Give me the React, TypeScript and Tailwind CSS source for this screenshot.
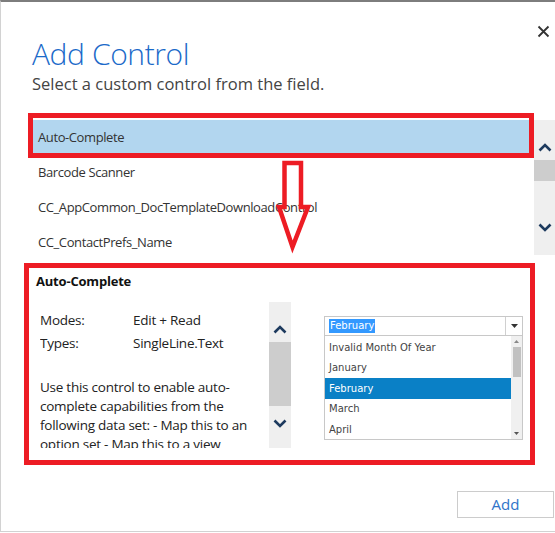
import React from "react";

const FONT = { fontFamily: '"Open Sans", "Noto Sans", sans-serif' };

function Chevron({ dir }: { dir: "up" | "down" }) {
  return (
    <svg width="14" height="9" viewBox="0 0 14 9" className="block">
      <path
        d={dir === "up" ? "M1.5 7.5 L7 2 L12.5 7.5" : "M1.5 1.5 L7 7 L12.5 1.5"}
        fill="none"
        stroke="#1d3a5e"
        strokeWidth="2.6"
      />
    </svg>
  );
}

function ScrollBar({
  width,
  topPad,
  topH,
  thumbH,
  bottomPad,
}: {
  width: string;
  topPad: string;
  topH: string;
  thumbH: string;
  bottomPad: string;
}) {
  return (
    <div className={`${width} h-full flex flex-col bg-[#efefef] shrink-0`}>
      <div className={`${topH} ${topPad} flex justify-center`}>
        <Chevron dir="up" />
      </div>
      <div className={`${thumbH} bg-[#cdcdcd]`} />
      <div className="flex-1" />
      <div className={`${bottomPad} flex justify-center`}>
        <Chevron dir="down" />
      </div>
    </div>
  );
}

const rows = [
  "Auto-Complete",
  "Barcode Scanner",
  "CC_AppCommon_DocTemplateDownloadControl",
  "CC_ContactPrefs_Name",
];

const months = ["Invalid Month Of Year", "January", "February", "March", "April"];

export default function App() {
  return (
    <div className="w-[555px] h-[533px] overflow-hidden bg-white relative" style={FONT}>
      <div className="h-[532px] border-t-2 border-t-[#7d7d7d] border-l border-l-[#d2d2d2] border-b border-b-[#d2d2d2] flex flex-col">
        {/* Header */}
        <div className="pt-[34px] pl-[31px]">
          <div className="text-[30px] leading-[36px] font-light text-[#1b6ac9] tracking-[-0.4px]">
            Add Control
          </div>
          <div className="text-[16.5px] leading-[24px] text-[#444444]">
            Select a custom control from the field.
          </div>
        </div>

        {/* List */}
        <div className="mt-[24px] pl-[32px] flex h-[135px]">
          <div className="w-[498px] h-full overflow-hidden">
            {rows.map((r, i) => (
              <div
                key={r}
                className={`h-[35px] flex items-center pl-[5px] text-[13px] tracking-[-0.4px] text-[#333333] ${
                  i === 0 ? "bg-[#b2d6ef]" : ""
                }`}
              >
                {r}
              </div>
            ))}
          </div>
          <div className="w-[3px]" />
          <ScrollBar width="w-[21px]" topH="h-[40px]" topPad="pt-[23px]" thumbH="h-[21px]" bottomPad="pb-[23px]" />
        </div>

        {/* Details */}
        <div className="mt-[8px] ml-[23px] w-[511px] h-[202px] border-[5px] border-[#ed1c24] flex flex-col">
          <div className="pt-[4px] pl-[7px] text-[13px] leading-[18px] font-bold text-[#111111] tracking-[-0.2px]">
            Auto-Complete
          </div>
          <div className="mt-[12px] h-[146px] flex">
            <div className="ml-[11px] w-[229px] h-full overflow-hidden pt-[7px] text-[13.5px] tracking-[-0.25px] text-[#222222]">
              <div className="flex leading-[23px]">
                <div className="w-[93px]">Modes:</div>
                <div>Edit + Read</div>
              </div>
              <div className="flex leading-[23px]">
                <div className="w-[93px]">Types:</div>
                <div>SingleLine.Text</div>
              </div>
              <div className="mt-[23px] leading-[19px] pr-[4px]">
                Use this control to enable auto-complete capabilities from the following data set: - Map this to an option set - Map this to a view
              </div>
            </div>
            <ScrollBar width="w-[22px]" topH="h-[40px]" topPad="pt-[23px]" thumbH="h-[64px]" bottomPad="pb-[20px]" />
            <div className="pl-[33px] pt-[14px]">
              <div className="w-[199px] text-[10px] text-[#444444]" style={{ fontFamily: '"DejaVu Sans", "Open Sans", sans-serif' }}>
                <div className="h-[20px] border border-[#c8c8c8] flex">
                  <div className="flex-1 flex items-center pl-[4px]">
                    <span className="bg-[#3399ff] text-white leading-[14px] px-[1px]">February</span>
                  </div>
                  <div className="w-[17px] border-l border-[#d0d0d0] flex items-center justify-center">
                    <svg width="7" height="4" viewBox="0 0 7 4">
                      <path d="M0 0 H7 L3.5 4 Z" fill="#333" />
                    </svg>
                  </div>
                </div>
                <div className="h-[104px] border border-t-0 border-[#c8c8c8] flex">
                  <div className="flex-1 pt-[1px]">
                    {months.map((m) => (
                      <div
                        key={m}
                        className={`h-[20.5px] flex items-center pl-[4px] ${
                          m === "February" ? "bg-[#0a80c6] text-white" : ""
                        }`}
                      >
                        {m}
                      </div>
                    ))}
                  </div>
                  <div className="w-[11px] bg-[#f0f0f0] flex flex-col items-center">
                    <svg width="5" height="3" viewBox="0 0 5 3" className="mt-[4px]">
                      <path d="M0 3 H5 L2.5 0 Z" fill="#888" />
                    </svg>
                    <div className="mt-[4px] w-[8px] h-[30px] bg-[#c1c1c1]" />
                    <div className="flex-1" />
                    <svg width="5" height="3" viewBox="0 0 5 3" className="mb-[4px]">
                      <path d="M0 0 H5 L2.5 3 Z" fill="#555" />
                    </svg>
                  </div>
                </div>
              </div>
            </div>
          </div>
        </div>

        {/* Footer */}
        <div className="mt-[26px] ml-[456px] w-[97px] h-[27px] border border-[#cccccc] flex items-center justify-center text-[15px] text-[#2f74c9]">
          Add
        </div>
      </div>

      {/* Annotation: red box around selected row */}
      <div className="absolute left-[28px] top-[113px] w-[506px] h-[45px] border-[5px] border-[#ed1c24] pointer-events-none" />
      {/* Annotation: red arrow */}
      <svg className="absolute left-0 top-0 pointer-events-none" width="555" height="533">
        <polygon
          points="284.5,163 301,163 301,207 308,207 292.5,247 279,207 284.5,207"
          fill="none"
          stroke="#ed1c24"
          strokeWidth="4.5"
        />
      </svg>

      {/* Close */}
      <div className="absolute left-[537px] top-[25px]">
        <svg width="13" height="13" viewBox="0 0 13 13">
          <path d="M1.5 1.5 L11.5 11.5 M11.5 1.5 L1.5 11.5" stroke="#333" strokeWidth="1.8" />
        </svg>
      </div>
    </div>
  );
}
